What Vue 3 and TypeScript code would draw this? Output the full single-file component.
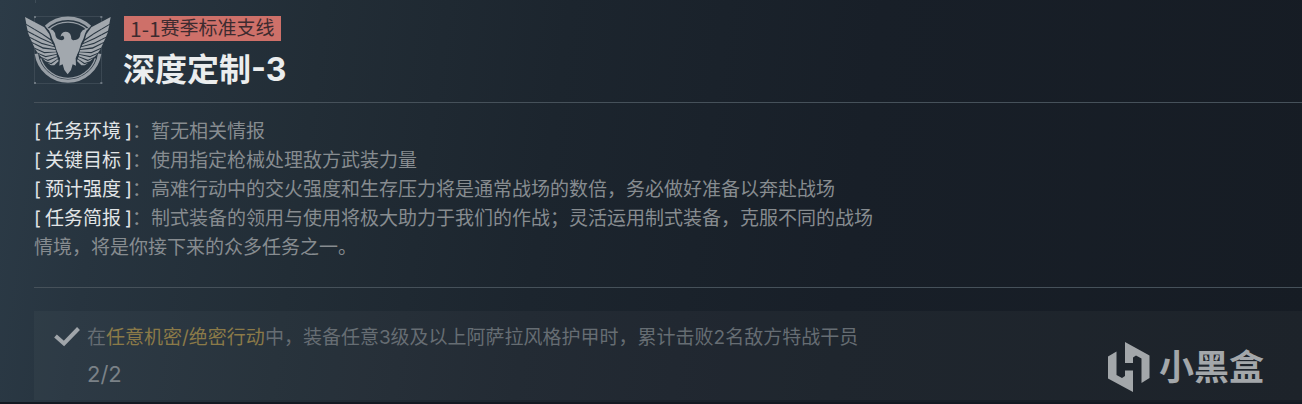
<script setup lang="ts">
interface Detail {
  label: string
  text: string
}

const details: Detail[] = [
  { label: '任务环境', text: '暂无相关情报' },
  { label: '关键目标', text: '使用指定枪械处理敌方武装力量' },
  { label: '预计强度', text: '高难行动中的交火强度和生存压力将是通常战场的数倍，务必做好准备以奔赴战场' },
  {
    label: '任务简报',
    text: '制式装备的领用与使用将极大助力于我们的作战；灵活运用制式装备，克服不同的战场情境，将是你接下来的众多任务之一。',
  },
]

const feathers: string[] = [
  'M30 36 L88 67 L103 88 L107 102 L80 84 L34 57 Z',
  'M34 60 L80 88 L108 107 L112 114 L78 98 L38 77 Z',
  'M38 81 L78 102 L114 118 L117 124 L80 113 L44 95 Z',
  'M45 99 L80 117 L119 127 L121 132 L84 127 L51 111 Z',
  'M52 115 L84 131 L122 135 L123 140 L88 141 L59 128 Z',
  'M60 132 L88 145 L124 142 L125 147 L92 153 L68 143 Z',
  'M70 147 L92 157 L125 149 L126 154 L98 164 L79 156 Z',
  'M82 160 L99 168 L127 156 L128 161 L108 174 L92 169 Z',
  'M97 173 L109 178 L129 163 L131 168 L118 181 L108 181 Z',
]
</script>

<template>
  <main class="mission">
    <header class="head">
      <svg class="emblem" viewBox="24 30 270 216" aria-hidden="true">
        <g class="frame">
          <rect x="59" y="35" width="201" height="201" />
        </g>
        <g class="corners">
          <rect x="57" y="33" width="6" height="6" />
          <rect x="256" y="33" width="6" height="6" />
          <rect x="57" y="231" width="6" height="6" />
          <rect x="256" y="231" width="6" height="6" />
        </g>
        <g class="ring">
          <path class="thick" d="M93 66 A96 96 0 0 1 225 66" />
          <path class="thin" d="M101 74 A86 86 0 0 1 217 74" />
          <path class="thick" d="M64 146 A96 96 0 0 0 254 146" />
          <path class="thin" d="M77 160 A86 86 0 0 0 241 160" />
        </g>
        <g id="wing" class="solid">
          <path v-for="(d, i) in feathers" :key="i" :d="d" />
          <path d="M93 67 L114 76 Q121 82 122 94 Q125 104 140 106 L136 158 Q124 140 119 116 Q110 100 107 86 Q103 74 93 67 Z" />
        </g>
        <use href="#wing" transform="matrix(-1 0 0 1 317 0)" />
        <path
          class="solid"
          d="M137 96 Q137 82 151 80 Q166 80 168 94 Q167 103 174 106 L186 106 L189 130 Q188 148 182 160 L183 182 L173 178 L168 195 L158 208 L148 195 L143 178 L133 182 L135 160 Q128 148 127 130 L130 106 Q147 108 148 99 L145 93 Q140 91 137 96 Z"
        />
      </svg>
      <div class="heading">
        <span class="tag"><span class="code">1-1</span>赛季标准支线</span>
        <h1>深度定制-3</h1>
      </div>
    </header>

    <section class="details">
      <p v-for="item in details" :key="item.label">
        <span class="label">[<b>{{ item.label }}</b>]</span>：{{ item.text }}
      </p>
    </section>

    <section class="objective">
      <svg class="check" viewBox="0 0 26 20" aria-hidden="true">
        <path d="M1.5 9 L10 16.500 L24.500 1.500" />
      </svg>
      <div>
        <p class="goal">在<em>任意机密/绝密行动</em>中，装备任意3级及以上阿萨拉风格护甲时，累计击败2名敌方特战干员</p>
        <p class="count">2/2</p>
      </div>
    </section>

    <div class="brand">
      <svg viewBox="0 0 42 50" aria-hidden="true">
        <path d="M0 14.500 L8.500 9.500 V33 L14 36 L17 34 V28.500 H25 V50 L0 36.500 Z" />
        <path d="M17 0 L41.500 13.500 V36 L33.500 41 V16.500 L28 13.500 L25 15.500 V21 H17 Z" />
      </svg>
      <span>小黑盒</span>
    </div>
  </main>
</template>

<style>
body {
  margin: 0;
  background: #161c24;
}
</style>

<style scoped>
.mission {
  position: relative;
  box-sizing: border-box;
  min-height: 100vh;
  padding: 16px 0 4px 34px;
  overflow: hidden;
  background:
    linear-gradient(#3f4d58, #3f4d58) 35px 0 / 1px 3px no-repeat,
    linear-gradient(#131922, #131922) 0 100% / 100% 2px no-repeat,
    linear-gradient(98deg, #2c3b47 0%, #27343f 9%, #222d36 24%, #1c252e 42%, #181f28 65%, #161c24 100%);
  font-family: Inter, "Noto Sans CJK SC", sans-serif;
  font-size: 19px;
}

h1,
p {
  margin: 0;
}

.head {
  display: flex;
  gap: 10px;
  height: 86px;
  margin-left: -11px;
}

.emblem {
  width: 90px;
  height: 72px;
  margin-top: -1px;
}

.frame {
  fill: none;
  stroke: #46535d;
  stroke-width: 2;
}

.corners {
  fill: #6c7780;
}

.ring {
  fill: none;
  stroke: #989fa6;
}

.thick {
  stroke-width: 10;
}

.thin {
  stroke-width: 4;
}

.solid {
  fill: #a2a8ae;
}

.heading {
  display: flex;
  flex-direction: column;
  align-items: flex-start;
}

.tag {
  display: flex;
  margin-left: 1px;
  padding: 0 6px;
  background: #ce7069;
  color: #3d2b2f;
  line-height: 25px;
}

.code {
  font-family: "Noto Sans CJK SC", sans-serif;
  font-size: 21px;
}

h1 {
  color: #ebedee;
  font-size: 32px;
  font-weight: 700;
  line-height: 58px;
}

.details {
  padding: 14px 0 25px;
  border-top: 1px solid #46515a;
  border-bottom: 1px solid #46515a;
  color: #878c90;
  line-height: 29px;
}

.details p {
  max-width: 844px;
}

.label {
  color: #e2e5e7;
}

.label b {
  padding: 0 4px;
  font-weight: 400;
}

.objective {
  display: flex;
  align-items: flex-start;
  gap: 7px;
  margin-top: 23px;
  padding: 9px 0 8px 20px;
  background: rgba(255, 255, 255, 0.03);
  color: #666d73;
  line-height: 36px;
}

.check {
  width: 26px;
  height: 20px;
  margin-top: 7px;
  fill: none;
  stroke: #a0a5aa;
  stroke-width: 4;
}

.goal em {
  color: #8b7a48;
  font-style: normal;
}

.count {
  color: #7a8187;
  font-size: 22px;
}

.brand {
  position: absolute;
  right: 38px;
  bottom: 12px;
  display: flex;
  align-items: center;
  gap: 9px;
  color: #a3a7aa;
  font-size: 35px;
  font-weight: 700;
  line-height: 50px;
}

.brand svg {
  width: 42px;
  height: 50px;
  fill: currentColor;
}
</style>
